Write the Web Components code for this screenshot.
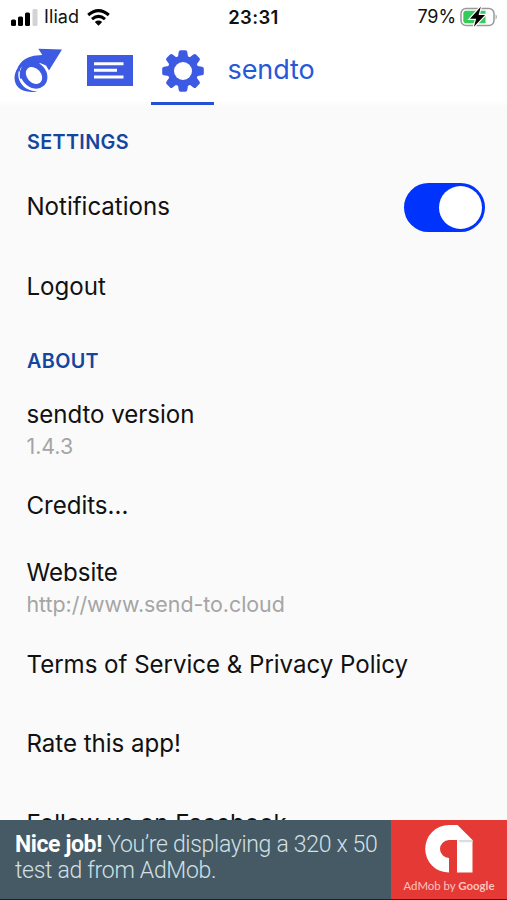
<!DOCTYPE html>
<html lang="en">
<head>
<meta charset="utf-8">
<meta name="viewport" content="width=device-width, initial-scale=1">
<title>sendto</title>
<style>
    body {
        margin: 0;
        height: 900px;
        overflow: hidden;
        background: #fafafa;
        font-family: Inter, "Liberation Sans", sans-serif;
        color: #111;
    }
</style>
</head>
<body>
<send-app></send-app>

<script>
customElements.define('status-bar', class extends HTMLElement{
    connectedCallback(){
        this.attachShadow({mode: 'open'});
        this.shadowRoot.innerHTML = `
        <style>
        :host {
            display: grid;
            grid-template-columns: 1fr auto 1fr;
            align-items: center;
            height: 34px;
            padding: 0 9px 0 11px;
            font-size: 18px;
            line-height: 34px;
        }
        .side { display: flex; align-items: center; }
        .right { justify-content: flex-end; }
        .carrier { margin: 0 8px 0 6px; letter-spacing: .1px; }
        .time { font-weight: 600; font-size: 18.5px; letter-spacing: .35px; margin-right: 2px; }
        .percent { margin-right: 4px; letter-spacing: -.1px; }
        svg { display: block; flex: none; }
        </style>

        <div class="side">
            <svg width="27" height="17" viewBox="0 0 27 17">
                <g fill="#000">
                    <rect x="0" y="10.5" width="5" height="6.5" rx="1.5"/>
                    <rect x="7" y="7.5" width="5" height="9.5" rx="1.5"/>
                    <rect x="14" y="3.5" width="5" height="13.5" rx="1.5"/>
                </g>
                <rect x="21.5" y="0" width="5" height="17" rx="1.5" fill="#d3d3d3"/>
            </svg>
            <span class="carrier">Iliad</span>
            <svg width="23" height="17" viewBox="0 0 23 17" fill="none" stroke="#000" stroke-width="3">
                <path d="M1.2 6Q11.5 -2.8 21.8 6"/>
                <path d="M5 10.2Q11.5 4.6 18 10.2"/>
                <path d="M7.8 13Q11.5 10.2 15.2 13L11.5 16.8Z" fill="#000" stroke="none"/>
            </svg>
        </div>
        <span class="time">23:31</span>
        <div class="side right">
            <span class="percent">79%</span>
            <svg width="38" height="22" viewBox="0 0 38 22">
                <rect x="1" y="2.5" width="33" height="17" rx="5" fill="#fff" stroke="#999" stroke-width="1.5"/>
                <path d="M6 4.7H25.5V17.3H6Q3.3 17.3 3.3 14.3V7.7Q3.3 4.7 6 4.7Z" fill="#35cb5b"/>
                <path d="M35.6 8.2Q38 10.8 35.6 13.8Z" fill="#999"/>
                <path d="M20.8 .8L10 12.7H16.2L13.9 20.8L25 8.9H18.6Z" fill="#000" stroke="#fff" stroke-width="2.4" paint-order="stroke"/>
            </svg>
        </div>
        `;
    }
});

customElements.define('tool-bar', class extends HTMLElement{
    connectedCallback(){
        this.attachShadow({mode: 'open'});
        this.shadowRoot.innerHTML = `
        <style>
        :host {
            display: flex;
            height: 71px;
            padding-left: 6px;
            color: #3d5ae3;
        }
        .tab {
            box-sizing: border-box;
            width: 63px;
            height: 71px;
            margin-right: 9.5px;
            padding-top: 12px;
            border-bottom: 3px solid transparent;
        }
        .active { border-bottom-color: #2450d5; }
        .title {
            margin-left: 4px;
            font-size: 27px;
            line-height: 72px;
            color: #2659d8;
            letter-spacing: -.1px;
        }
        svg { display: block; margin: 0 auto; }
        </style>

        <div class="tab">
            <svg width="50" height="50" viewBox="0 0 50 50">
                <g fill="currentColor">
                    <path d="M25.3 2.8L49 3.6L36 24.6L33 19.5L27 17L12 32L6 33Q6 25 9.5 20.2L2.6 27.5Q4.5 19.5 9.5 15C15 10.5 21 9.3 29.3 9Z"/>
                    <ellipse cx="21" cy="29" rx="14.6" ry="12.4" transform="rotate(48 21 29)"/>
                    <path d="M3.3 24.5C-2 36 4.5 48.6 24.3 45.4C10 45 3.6 35.5 7.5 21.5Z"/>
                </g>
                <ellipse cx="21" cy="29.5" rx="9.5" ry="7" transform="rotate(48 21 29.5)" fill="#fff"/>
                <path d="M6.3 25.5C4.5 33 9.3 40.8 17 43" fill="none" stroke="#fff" stroke-width="1.3"/>
            </svg>
        </div>
        <div class="tab">
            <svg width="46" height="50" viewBox="0 0 46 50">
                <rect y="9" width="46" height="31" fill="currentColor"/>
                <path d="M7 17.7H36.5M7 24.3H30M7 30.9H36.5" stroke="#fff" stroke-width="3"/>
            </svg>
        </div>
        <div class="tab active">
            <svg class="gear" width="42" height="50" viewBox="-21 -25 42 50" fill="currentColor"></svg>
        </div>
        <span class="title"><slot></slot></span>
        `;

        // eight teeth around a ring
        let gear = this.shadowRoot.querySelector('.gear');
        let teeth = '';
        for(let i = 0; i < 8; i++){
            teeth += `<path transform="rotate(${i * 45})" d="M-5.2 -13L-4.3 -19Q-4 -20.8 -2.4 -20.8H2.4Q4 -20.8 4.3 -19L5.2 -13Z"/>`;
        }
        gear.innerHTML = `${teeth}<circle r="15.4"/><circle r="9" fill="#fff"/>`;
    }
});

customElements.define('section-title', class extends HTMLElement{
    connectedCallback(){
        this.attachShadow({mode: 'open'});
        this.shadowRoot.innerHTML = `
        <style>
        :host {
            display: block;
            padding: 23px 27px 0;
            height: 37.6px;
            font-size: 19.8px;
            font-weight: 600;
            line-height: 24px;
            letter-spacing: .35px;
            color: #14469f;
        }
        </style>
        <slot></slot>
        `;
    }
});

customElements.define('toggle-switch', class extends HTMLElement{
    connectedCallback(){
        this.attachShadow({mode: 'open'});
        this.shadowRoot.innerHTML = `
        <style>
        :host {
            display: flex;
            justify-content: flex-end;
            box-sizing: border-box;
            width: 81px;
            height: 49px;
            padding: 3px;
            border-radius: 25px;
            background: #0033fc;
        }
        .knob {
            width: 43px;
            height: 43px;
            border-radius: 50%;
            background: #fff;
        }
        </style>
        <div class="knob"></div>
        `;
    }
});

customElements.define('setting-row', class extends HTMLElement{
    connectedCallback(){
        this.attachShadow({mode: 'open'});
        this.shadowRoot.innerHTML = `
        <style>
        :host {
            display: flex;
            align-items: center;
            justify-content: space-between;
            box-sizing: border-box;
            height: 79.4px;
            padding: 0 22px 0 26.5px;
            font-size: 24.1px;
            line-height: 32px;
            letter-spacing: -.03px;
            white-space: nowrap;
        }
        ::slotted([slot="note"]) {
            display: block;
            margin-bottom: -7px;
            font-size: 21.4px;
            line-height: 31px;
            color: #a5a5a5;
        }
        </style>
        <div class="text">
            <slot></slot>
            <slot name="note"></slot>
        </div>
        <slot name="control"></slot>
        `;
    }
});

customElements.define('ad-banner', class extends HTMLElement{
    connectedCallback(){
        this.attachShadow({mode: 'open'});
        this.shadowRoot.innerHTML = `
        <style>
        :host {
            display: flex;
            box-sizing: border-box;
            height: 80px;
            border-bottom: 1px solid #18242b;
            background: #455a64;
            font-family: Roboto, sans-serif;
        }
        .copy {
            flex: 1;
            min-width: 0;
            padding: 12px 0 0 15px;
            font-size: 23px;
            font-weight: 300;
            line-height: 26.4px;
            letter-spacing: -.3px;
            color: #d3e0e6;
            white-space: nowrap;
        }
        b { font-weight: 700; color: #fff; letter-spacing: -.4px; }
        .first { display: block; }
        .brand {
            display: flex;
            flex: none;
            flex-direction: column;
            align-items: center;
            width: 116px;
            padding-top: 5px;
            box-sizing: border-box;
            background: #e53935;
        }
        .by {
            font-family: Lato, sans-serif;
            font-size: 11.4px;
            line-height: 14px;
            margin-top: 6px;
            color: #fbc4bd;
            white-space: nowrap;
        }
        .by span { font-weight: 700; }
        svg { display: block; }
        </style>

        <div class="copy">
            <span class="first"><b>Nice job!</b> You’re displaying a 320 x 50</span>
            <span class="second">test ad from AdMob.</span>
        </div>
        <div class="brand">
            <svg width="48" height="48" viewBox="0 0 48 48">
                <path d="M32.5 0H24A23.7 23.7 0 0 0 24 47.6V33A9 9 0 0 1 24 15H47.5Z" fill="#fff"/>
                <path d="M32 15H47.5V47.5H32Z" fill="#fff"/>
                <path d="M33 15H47.5V17.3H35Z" fill="#ddd"/>
            </svg>
            <div class="by">AdMob by <span>Google</span></div>
        </div>
        `;
    }
});

customElements.define('send-app', class extends HTMLElement{
    connectedCallback(){
        this.attachShadow({mode: 'open'});
        this.shadowRoot.innerHTML = `
        <style>
        :host {
            display: flex;
            flex-direction: column;
            height: 900px;
        }
        header {
            flex: none;
            height: 107px;
            background: linear-gradient(#fff 101px, #fafafa);
        }
        main {
            flex: 1;
            min-height: 0;
            overflow: hidden;
        }
        ad-banner { flex: none; }
        </style>

        <header>
            <status-bar></status-bar>
            <tool-bar>sendto</tool-bar>
        </header>
        <main>
            <section-title>SETTINGS</section-title>
            <setting-row>Notifications<toggle-switch slot="control"></toggle-switch></setting-row>
            <setting-row>Logout</setting-row>
            <section-title>ABOUT</section-title>
            <setting-row>sendto version<span slot="note">1.4.3</span></setting-row>
            <setting-row>Credits...</setting-row>
            <setting-row>Website<span slot="note">http://www.send-to.cloud</span></setting-row>
            <setting-row>Terms of Service &amp; Privacy Policy</setting-row>
            <setting-row>Rate this app!</setting-row>
            <setting-row>Follow us on Facebook</setting-row>
        </main>
        <ad-banner></ad-banner>
        `;
    }
});
</script>
</body>
</html>
